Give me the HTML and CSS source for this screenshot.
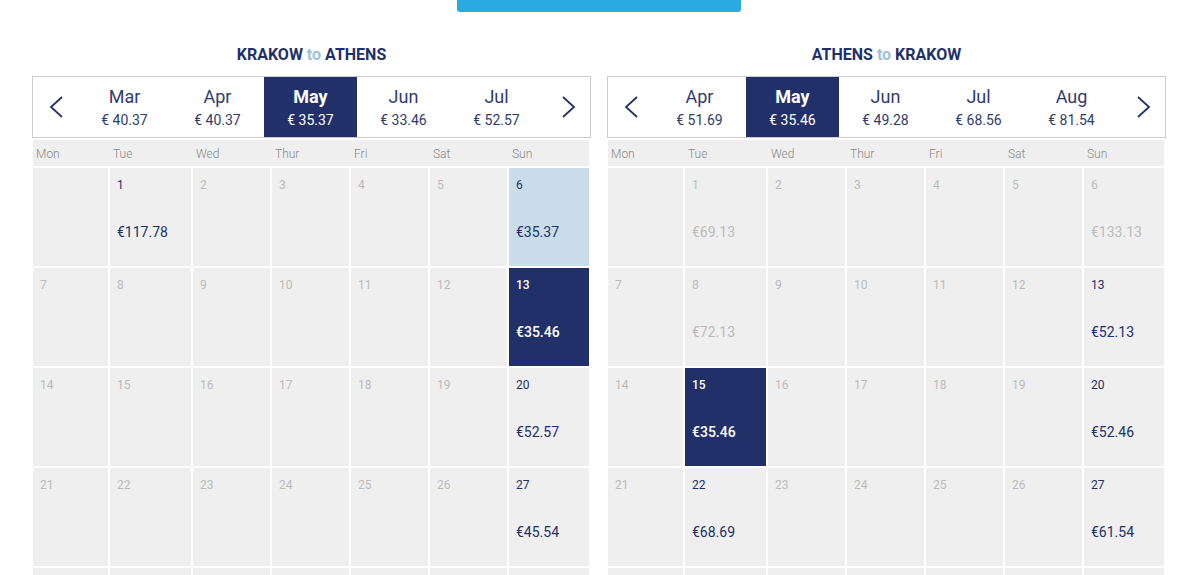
FILE: index.html
```html
<!DOCTYPE html>
<html lang="en">
<head>
    <meta charset="UTF-8">
    <meta name="viewport" content="width=device-width, initial-scale=1.0">
    <title>Flight Fares Calendar</title>
    <link rel="stylesheet" href="styles.css">
</head>
<body>
    <div class="top-bar">
        <div class="search-button"></div>
    </div>

    <div class="calendars">
        <section class="panel">
            <h2 class="route">KRAKOW <span>to</span> ATHENS</h2>
            <div class="months">
                <div class="arrow prev">
                    <svg width="14" height="22" viewBox="0 0 14 22"><polyline points="13,1 2,11 13,21"/></svg>
                </div>
                <div class="month"><span class="name">Mar</span><span class="price">€ 40.37</span></div>
                <div class="month"><span class="name">Apr</span><span class="price">€ 40.37</span></div>
                <div class="month active"><span class="name">May</span><span class="price">€ 35.37</span></div>
                <div class="month"><span class="name">Jun</span><span class="price">€ 33.46</span></div>
                <div class="month"><span class="name">Jul</span><span class="price">€ 52.57</span></div>
                <div class="arrow next">
                    <svg width="14" height="22" viewBox="0 0 14 22"><polyline points="1,1 12,11 1,21"/></svg>
                </div>
            </div>
            <div class="weekdays">
                <span>Mon</span><span>Tue</span><span>Wed</span><span>Thur</span><span>Fri</span><span>Sat</span><span>Sun</span>
            </div>
            <div class="days" id="outbound-days"></div>
        </section>

        <section class="panel">
            <h2 class="route">ATHENS <span>to</span> KRAKOW</h2>
            <div class="months">
                <div class="arrow prev">
                    <svg width="14" height="22" viewBox="0 0 14 22"><polyline points="13,1 2,11 13,21"/></svg>
                </div>
                <div class="month"><span class="name">Apr</span><span class="price">€ 51.69</span></div>
                <div class="month active"><span class="name">May</span><span class="price">€ 35.46</span></div>
                <div class="month"><span class="name">Jun</span><span class="price">€ 49.28</span></div>
                <div class="month"><span class="name">Jul</span><span class="price">€ 68.56</span></div>
                <div class="month"><span class="name">Aug</span><span class="price">€ 81.54</span></div>
                <div class="arrow next">
                    <svg width="14" height="22" viewBox="0 0 14 22"><polyline points="1,1 12,11 1,21"/></svg>
                </div>
            </div>
            <div class="weekdays">
                <span>Mon</span><span>Tue</span><span>Wed</span><span>Thur</span><span>Fri</span><span>Sat</span><span>Sun</span>
            </div>
            <div class="days" id="return-days"></div>
        </section>
    </div>

    <script>
        // [day, price, state] - state: 'off' = greyed fare, 'picked' = outbound pick, 'selected' = current
        // 0 = blank cell
        const outbound = [
            0, [1, '117.78'], [2], [3], [4], [5], [6, '35.37', 'picked'],
            [7], [8], [9], [10], [11], [12], [13, '35.46', 'selected'],
            [14], [15], [16], [17], [18], [19], [20, '52.57'],
            [21], [22], [23], [24], [25], [26], [27, '45.54'],
            0, 0, 0, 0, 0, 0, 0
        ];

        const inbound = [
            0, [1, '69.13', 'off'], [2], [3], [4], [5], [6, '133.13', 'off'],
            [7], [8, '72.13', 'off'], [9], [10], [11], [12], [13, '52.13'],
            [14], [15, '35.46', 'selected'], [16], [17], [18], [19], [20, '52.46'],
            [21], [22, '68.69'], [23], [24], [25], [26], [27, '61.54'],
            0, 0, 0, 0, 0, 0, 0
        ];

        function renderDays(container, days) {
            days.forEach(item => {
                const cell = document.createElement('div');
                cell.className = 'day';
                if (item) {
                    const [num, price, state] = item;
                    if (price && !state) cell.classList.add('available');
                    if (state) cell.classList.add(state);

                    const n = document.createElement('span');
                    n.className = 'num';
                    n.textContent = num;
                    cell.appendChild(n);

                    if (price) {
                        const p = document.createElement('span');
                        p.className = 'fare';
                        p.textContent = '€' + price;
                        cell.appendChild(p);
                    }
                }
                container.appendChild(cell);
            });
        }

        renderDays(document.getElementById('outbound-days'), outbound);
        renderDays(document.getElementById('return-days'), inbound);
    </script>
</body>
</html>
```

FILE: styles.css
```css
body {
    margin: 0;
    font-family: 'Roboto', 'Liberation Sans', sans-serif;
    background: #ffffff;
    color: #22306a;
    overflow: hidden;
}

.top-bar {
    display: flex;
    justify-content: center;
    padding-right: 2px;
}

.search-button {
    width: 284px;
    height: 12px;
    background-color: #29abe2;
    border-radius: 0 0 3px 3px;
}

.calendars {
    display: flex;
    gap: 16px;
    padding: 33px 32px 0;
}

.panel {
    width: 559px;
    flex: 0 0 559px;
}

.route {
    margin: 0 0 11px;
    font-size: 16px;
    line-height: 20px;
    font-weight: 700;
    text-align: center;
    color: #22306a;
}

.route span {
    color: #9fc2d9;
}

/* month strip */
.months {
    display: flex;
    height: 60px;
    border: 1px solid #cccccc;
}

.arrow {
    width: 45px;
    display: flex;
    align-items: center;
    justify-content: center;
}

.arrow.next {
    width: 42px;
    padding-left: 5px;
}

.arrow svg polyline {
    fill: none;
    stroke: #22306a;
    stroke-width: 1.8;
}

.month {
    width: 93px;
    display: flex;
    flex-direction: column;
    align-items: center;
    padding-top: 9px;
    box-sizing: border-box;
}

.month .name {
    font-size: 18px;
    line-height: 22px;
    font-weight: 400;
    color: #2f3c6c;
}

.month .price {
    margin-top: 4px;
    font-size: 14px;
    line-height: 16px;
    color: #2f3c6c;
}

.month.active {
    background-color: #22306a;
}

.month.active .name {
    color: #ffffff;
    font-weight: 700;
}

.month.active .price {
    color: #ffffff;
}

/* day grid */
.weekdays,
.days {
    display: grid;
    grid-template-columns: 75px 81px 77px 77px 77px 77px 80px;
    column-gap: 2px;
    margin-left: 1px;
}

.weekdays {
    margin-top: 2px;
    height: 26px;
    width: 556px;
    background-color: #efefef;
    align-items: center;
}

.weekdays span {
    padding: 2px 0 0 3px;
    font-size: 12px;
    font-weight: 300;
    color: #888888;
}

.days {
    row-gap: 2px;
    margin-top: 2px;
}

.day {
    height: 98px;
    background-color: #efefef;
    padding: 10px 0 0 7px;
    box-sizing: border-box;
    display: flex;
    flex-direction: column;
}

.day .num {
    font-size: 12px;
    line-height: 14px;
    color: #bbbbbb;
}

.day .fare {
    margin-top: 32px;
    font-size: 14px;
    line-height: 16px;
    color: #22306a;
}

.day.available .num,
.day.picked .num {
    color: #22306a;
}

.day.off .fare {
    color: #bbbbbb;
}

.day.picked {
    background-color: #c8dcea;
}

.day.selected {
    background-color: #22306a;
}

.day.selected .num,
.day.selected .fare {
    color: #ffffff;
    font-weight: 500;
}
```
